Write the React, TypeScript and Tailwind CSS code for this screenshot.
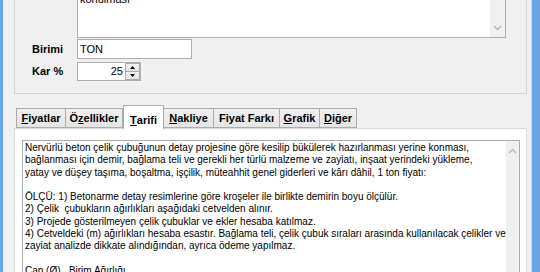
const tabs = [
  { id: "fiyatlar", pre: "", key: "F", post: "iyatlar", w: "w-[50px]" },
  { id: "ozellikler", pre: "Ö", key: "z", post: "ellikler", w: "w-[57px]" },
  { id: "tarifi", pre: "", key: "T", post: "arifi", w: "w-[41px]" },
  { id: "nakliye", pre: "", key: "N", post: "akliye", w: "w-[50px]" },
  { id: "fark", pre: "", key: "", post: "Fiyat Farkı", w: "w-[66px]" },
  { id: "grafik", pre: "", key: "G", post: "rafik", w: "w-[40px]" },
  { id: "diger", pre: "", key: "D", post: "iğer", w: "w-[37px]" },
];

const lines = [
  "Nervürlü beton çelik çubuğunun detay projesine göre kesilip bükülerek hazırlanması yerine konması,",
  "bağlanması için demir, bağlama teli ve gerekli her türlü malzeme ve zayiatı, inşaat yerindeki yükleme,",
  "yatay ve düşey taşıma, boşaltma, işçilik, müteahhit genel giderleri ve kârı dâhil, 1 ton fiyatı:",
  "",
  "ÖLÇÜ: 1) Betonarme detay resimlerine göre kroşeler ile birlikte demirin boyu ölçülür.",
  "2) Çelik  çubukların ağırlıkları aşağıdaki cetvelden alınır.",
  "3) Projede gösterilmeyen çelik çubuklar ve ekler hesaba katılmaz.",
  "4) Cetveldeki (m) ağırlıkları hesaba esastır. Bağlama teli, çelik çubuk sıraları arasında kullanılacak çelikler ve",
  "zayiat analizde dikkate alındığından, ayrıca ödeme yapılmaz.",
  "",
  "Çap (Ø)   Birim Ağırlığı",
];

function Chevron({ up }: { up?: boolean }) {
  return (
    <svg width="9" height="6" viewBox="0 0 9 6" className="text-[#b5b5b5]">
      <path d={up ? "M1 5 L4.5 1.5 L8 5" : "M1 1 L4.5 4.5 L8 1"} fill="none" stroke="currentColor" strokeWidth="1.3" />
    </svg>
  );
}

export default function App() {
  return (
    <div className="flex h-[272px] w-[540px] overflow-hidden bg-[#f0f0f0] font-['Liberation_Sans',Arial,sans-serif] text-[11px] text-black">
      <div className="w-[3px] shrink-0 bg-[#68a6e8]" />

      <div className="flex w-[528px] shrink-0 flex-col pl-[11px] pr-[4px]">
        {/* group box */}
        <div className="h-[94px] shrink-0 border-x border-b border-[#d5d5d5] pl-[17px]">
          <div className="ml-[45px] flex h-[38px] w-[429px] overflow-hidden border-x border-b border-[#abadb3] bg-white">
            <div className="flex-1 pl-[2px]">
              <p className="-mt-[7px] leading-[12px]">konulması</p>
            </div>
            <div className="flex w-[15px] flex-col items-center justify-end bg-[#f0f0f0] pb-[6px]">
              <Chevron />
            </div>
          </div>

          <div className="mt-[1px] grid grid-cols-[45px_auto] items-center gap-y-[3px]">
            <span className="font-bold">Birimi</span>
            <div className="flex h-[20px] w-[115px] items-center border border-[#abadb3] bg-white pl-[2px]">TON</div>
            <span className="font-bold">Kar %</span>
            <div className="flex h-[19px] w-[64px] items-stretch border border-[#abadb3] bg-white">
              <div className="flex flex-1 items-center justify-end pr-[2px]">25</div>
              <div className="flex w-[15px] flex-col">
                <div className="flex flex-1 items-center justify-center border border-[#acacac] bg-gradient-to-b from-[#f2f2f2] to-[#e3e3e3]">
                  <svg width="5" height="3" viewBox="0 0 5 3">
                    <path d="M0 3 L2.5 0 L5 3 Z" fill="#000" />
                  </svg>
                </div>
                <div className="flex flex-1 items-center justify-center border border-t-0 border-[#acacac] bg-gradient-to-b from-[#f2f2f2] to-[#e3e3e3]">
                  <svg width="5" height="3" viewBox="0 0 5 3">
                    <path d="M0 0 L2.5 3 L5 0 Z" fill="#000" />
                  </svg>
                </div>
              </div>
            </div>
          </div>
        </div>

        {/* tabs */}
        <div className="mt-[11px] flex h-[23px] shrink-0 items-end pl-[2px]">
          {tabs.map((t) =>
            t.id === "tarifi" ? (
              <div
                key={t.id}
                className={`relative z-10 -mb-px flex h-[24px] ${t.w} shrink-0 items-start justify-center border border-b-0 border-[#acacac] bg-white pt-[6px] font-bold`}
              >
                {t.pre}
                <u>{t.key}</u>
                {t.post}
              </div>
            ) : (
              <div
                key={t.id}
                className={`flex h-[20px] ${t.w} shrink-0 items-center justify-center border border-l-0 border-[#acacac] bg-gradient-to-b from-[#f0f0f0] to-[#e5e5e5] font-bold first:border-l`}
              >
                {t.pre}
                {t.key && <u>{t.key}</u>}
                {t.post}
              </div>
            )
          )}
        </div>

        {/* tab page */}
        <div className="flex-1 border border-[#d9d9d9] bg-white pl-[7px] pr-[6px] pt-[11px]">
          <div className="flex h-[200px] border border-[#abadb3] bg-white">
            <div className="flex-1 whitespace-pre pl-[2px] pt-[1px] text-[10px] leading-[12.25px]">
              {lines.map((l, i) => (
                <div key={i} className="h-[12.25px]">
                  {l}
                </div>
              ))}
            </div>
            <div className="flex w-[17px] justify-center bg-[#f0f0f0] pt-[7px]">
              <Chevron up />
            </div>
          </div>
        </div>
      </div>

      <div className="w-[1px] shrink-0 bg-[#c9d6e4]" />
      <div className="flex-1 bg-[#68a6e8]" />
    </div>
  );
}
